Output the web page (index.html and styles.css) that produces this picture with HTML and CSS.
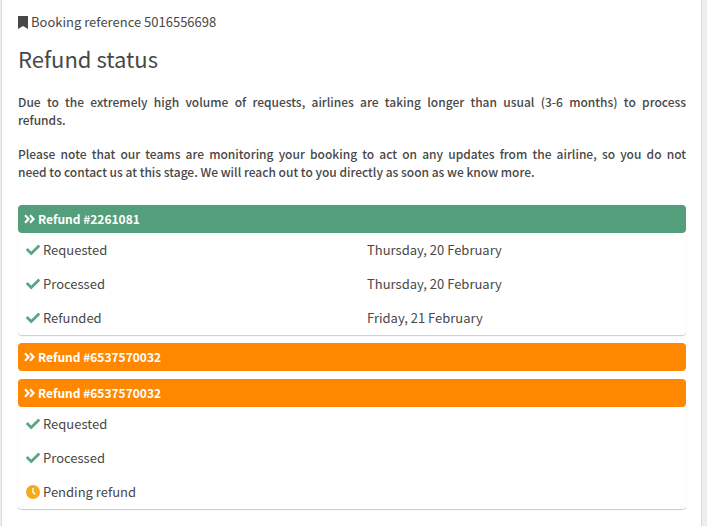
FILE: index.html
```
<!DOCTYPE html>
<html lang="en">
<head>
    <meta charset="UTF-8">
    <meta name="viewport" content="width=device-width, initial-scale=1.0">
    <title>Refund status</title>
    <link rel="stylesheet" href="styles.css">
</head>
<body>

    <!-- Shared icons -->
    <svg class="sprite" aria-hidden="true">
        <symbol id="check" viewBox="0 0 512 512">
            <path d="M173.9 439.4l-166.4-166.4c-10-10-10-26.200 0-36.200l36.200-36.200c10-10 26.200-10 36.200 0L192 312.700 432.100 72.600c10-10 26.200-10 36.200 0l36.200 36.200c10 10 10 26.200 0 36.200l-294.400 294.400c-10 10-26.200 10-36.200 0z"/>
        </symbol>
        <symbol id="chevrons" viewBox="0 0 11 10">
            <path d="M1 1.300L4.500 5L1 8.700M6 1.300L9.500 5L6 8.700" fill="none" stroke="currentColor" stroke-width="2.200"/>
        </symbol>
        <symbol id="clock" viewBox="0 0 14 14">
            <circle cx="7" cy="7" r="7"/>
            <path d="M7 3V7.300L9.300 9.200" fill="none" stroke="#fff" stroke-width="1.400"/>
        </symbol>
    </svg>

    <main class="page">
        <div class="booking">
            <svg class="bookmark" viewBox="0 0 10 13" aria-hidden="true"><path d="M0 0H10V13L5 10L0 13Z"/></svg>
            <span>Booking reference 5016556698</span>
        </div>
        <h1>Refund status</h1>

        <div class="notice">
            <p><span class="full-line">Due to the extremely high volume of requests, airlines are taking longer than usual (3-6 months) to process</span> refunds.</p>
            <p><span class="full-line">Please note that our teams are monitoring your booking to act on any updates from the airline, so you do not</span> need to contact us at this stage. We will reach out to you directly as soon as we know more.</p>
        </div>

        <section class="refund">
            <button type="button" class="refund-header done" aria-expanded="true">
                <svg class="chevrons" aria-hidden="true"><use href="#chevrons"/></svg>
                <span>Refund #2261081</span>
            </button>
            <table class="steps">
                <tr>
                    <td><div class="step"><svg class="icon" aria-hidden="true"><use href="#check"/></svg>Requested</div></td>
                    <td>Thursday, 20 February</td>
                </tr>
                <tr>
                    <td><div class="step"><svg class="icon" aria-hidden="true"><use href="#check"/></svg>Processed</div></td>
                    <td>Thursday, 20 February</td>
                </tr>
                <tr>
                    <td><div class="step"><svg class="icon" aria-hidden="true"><use href="#check"/></svg>Refunded</div></td>
                    <td>Friday, 21 February</td>
                </tr>
            </table>
        </section>

        <section class="refund">
            <button type="button" class="refund-header pending" aria-expanded="false">
                <svg class="chevrons" aria-hidden="true"><use href="#chevrons"/></svg>
                <span>Refund #6537570032</span>
            </button>
        </section>

        <section class="refund">
            <button type="button" class="refund-header pending" aria-expanded="true">
                <svg class="chevrons" aria-hidden="true"><use href="#chevrons"/></svg>
                <span>Refund #6537570032</span>
            </button>
            <table class="steps">
                <tr>
                    <td><div class="step"><svg class="icon" aria-hidden="true"><use href="#check"/></svg>Requested</div></td>
                    <td></td>
                </tr>
                <tr>
                    <td><div class="step"><svg class="icon" aria-hidden="true"><use href="#check"/></svg>Processed</div></td>
                    <td></td>
                </tr>
                <tr>
                    <td><div class="step"><svg class="icon waiting" aria-hidden="true"><use href="#clock"/></svg>Pending refund</div></td>
                    <td></td>
                </tr>
            </table>
        </section>
    </main>

</body>
</html>
```
FILE: styles.css
```
* {
    box-sizing: border-box;
}
body {
    margin: 0;
    background-color: #eee;
    color: #484848;
    font-family: "Noto Sans CJK JP", "Noto Sans", sans-serif;
    font-size: 13px;
    line-height: 18px;
}
.sprite {
    display: none;
}
.page {
    min-height: 100vh;
    margin: 0 5px 0 1px;
    padding: 13px 15px 16px 16px;
    background-color: #fff;
    border: solid #ddd;
    border-width: 0 1px;
}
.booking {
    display: flex;
    align-items: center;
    gap: 3px;
}
.bookmark {
    width: 10px;
    height: 13px;
    fill: #484848;
}
h1 {
    margin: 11px 0 19px;
    font-size: 22px;
    font-weight: 400;
    line-height: 32px;
}
.notice {
    margin-bottom: 24px;
    font-size: 12px;
    font-weight: 500;
    text-align: justify;
}
.notice p {
    margin: 0 0 16px;
}
.full-line {
    display: block;
    text-align-last: justify;
}
.refund {
    margin-bottom: 8px;
}
.refund-header {
    display: flex;
    align-items: center;
    gap: 3px;
    width: 100%;
    height: 28px;
    padding: 0 6px;
    border: none;
    border-radius: 4px;
    color: #fff;
    font: inherit;
    font-size: 12px;
    font-weight: 700;
    cursor: pointer;
}
.refund-header.done {
    background-color: #539e7b;
}
.refund-header.pending {
    background-color: #ff8800;
}
.chevrons {
    width: 11px;
    height: 10px;
}
.steps {
    width: 100%;
    table-layout: fixed;
    border-spacing: 0;
    border-radius: 0 0 4px 4px;
    box-shadow: 0 1px 1px rgba(0, 0, 0, 0.2);
}
.steps td {
    height: 34px;
    padding: 0 8px;
}
.steps td + td {
    padding-left: 15px;
}
.step {
    display: flex;
    align-items: center;
    gap: 3px;
}
.icon {
    width: 14px;
    height: 14px;
    fill: #5aa686;
}
.icon.waiting {
    fill: #f5a91d;
}
```
